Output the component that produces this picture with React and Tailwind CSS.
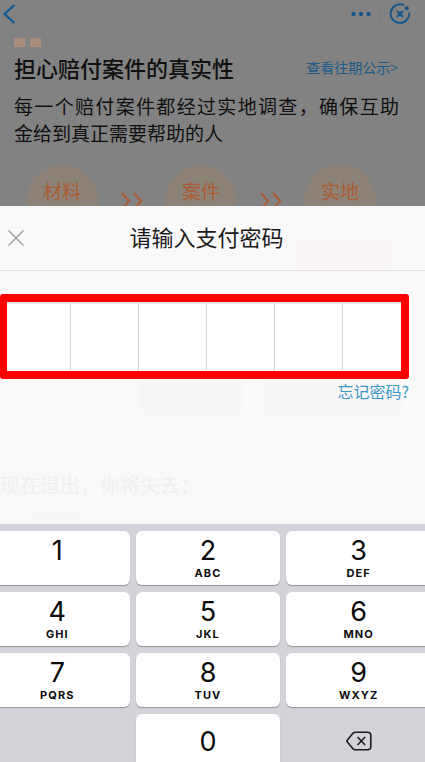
import React, { Fragment, useState } from 'react';

const KEYS = [
  { digit: '1', letters: '' },
  { digit: '2', letters: 'ABC' },
  { digit: '3', letters: 'DEF' },
  { digit: '4', letters: 'GHI' },
  { digit: '5', letters: 'JKL' },
  { digit: '6', letters: 'MNO' },
  { digit: '7', letters: 'PQRS' },
  { digit: '8', letters: 'TUV' },
  { digit: '9', letters: 'WXYZ' }
];

const STEPS = ['材料', '案件', '实地'];

const PIN_LENGTH = 6;

const BackIcon = () => (
  <svg width="14" height="20" viewBox="0 0 14 20" fill="none" stroke="#0f5a96" strokeWidth="2.2">
    <path d="M12.5 1 2.5 10l10 9" />
  </svg>
);

const MoreIcon = () => (
  <svg width="22" height="6" viewBox="0 0 22 6" fill="#14568c">
    <circle cx="3.5" cy="3" r="2.2" />
    <circle cx="11" cy="3" r="2.2" />
    <circle cx="18.5" cy="3" r="2.2" />
  </svg>
);

const ExitIcon = () => (
  <svg width="22" height="22" viewBox="0 0 22 22" fill="none" stroke="#14568c" strokeWidth="1.9">
    <path d="M15 2.2A9.3 9.3 0 1 0 20.2 9.5" />
    <path d="m8 8 6 6M14 8l-6 6" />
    <circle cx="17.8" cy="5.2" r="2" fill="#14568c" stroke="none" />
  </svg>
);

const StepArrows = () => (
  <svg className="mt-[27px]" width="22" height="18" viewBox="0 0 22 18" fill="none" stroke="#ac5a33" strokeWidth="2">
    <path d="m1 1 7 8-7 8M13 1l7 8-7 8" />
  </svg>
);

const CloseIcon = () => (
  <svg width="16" height="16" viewBox="0 0 16 16" fill="none" stroke="#9b9b9b" strokeWidth="1.3">
    <path d="m.5.5 15 15M15.5.5l-15 15" />
  </svg>
);

const BackspaceIcon = () => (
  <svg width="26" height="20" viewBox="0 0 26 20" fill="none" stroke="#1d1d20" strokeWidth="1.6" strokeLinejoin="round">
    <path d="M9.2 1.2h12.6a3 3 0 0 1 3 3v11.6a3 3 0 0 1-3 3H9.2a3 3 0 0 1-2.1-.9L1.6 11.2a1.7 1.7 0 0 1 0-2.4l5.5-6.7a3 3 0 0 1 2.1-.9Z" />
    <path d="m11.5 6 7.6 8M19.1 6l-7.6 8" />
  </svg>
);

const CasePage = () => (
  <main className="flex-1 min-h-0 overflow-hidden bg-[#828282] text-[#101010]">
    <header className="flex h-7 items-center justify-between pl-[2px] pr-[14px]">
      <button type="button" aria-label="返回">
        <BackIcon />
      </button>
      <div className="flex items-center">
        <button type="button" aria-label="更多">
          <MoreIcon />
        </button>
        <span className="mx-2 h-5 w-px bg-[#7b7b7b]" />
        <button type="button" aria-label="关闭">
          <ExitIcon />
        </button>
      </div>
    </header>

    <div className="mt-[10px] flex gap-[5px] pl-[14px]">
      <span className="h-[9px] w-[11px] bg-[#a88c7e]" />
      <span className="h-[9px] w-[11px] bg-[#a88c7e]" />
    </div>

    <div className="mt-[6px] flex items-center justify-between pl-[14px] pr-[27px]">
      <h1 className="text-[22px] leading-7 font-medium">担心赔付案件的真实性</h1>
      <a href="#cases" className="text-[14px] leading-7 text-[#1c5a87]">查看往期公示&gt;</a>
    </div>

    <p className="mt-[11px] pl-[14px] pr-[26px] text-[19px] leading-[27px]">
      <span className="block [text-align-last:justify]">每一个赔付案件都经过实地调查，确保互助</span>
      <span className="block">金给到真正需要帮助的人</span>
    </p>

    <div className="mt-[19px] flex items-start justify-between pl-[26px] pr-[49px]">
      {STEPS.map((step, i) => (
        <Fragment key={step}>
          {i > 0 && <StepArrows />}
          <div className="h-[72px] w-[72px] rounded-full bg-[#8d8277] pt-3 text-center text-[19px] leading-7 text-[#ac5a33]">
            {step}
          </div>
        </Fragment>
      ))}
    </div>
  </main>
);

const PasswordSheet = ({ pin }) => (
  <section className="relative bg-[#f9f9f9]">
    {/* Cards showing faintly through the sheet */}
    <div className="absolute top-[31px] left-[292px] h-8 w-[102px] rounded-lg bg-[#faf7f6]" />
    <div className="absolute top-[172px] left-[140px] h-[38px] w-[103px] rounded-lg bg-[#f9f7f6]" />
    <div className="absolute top-[172px] left-[264px] h-[38px] w-[139px] rounded-lg bg-[#f9f7f6]" />

    <div className="relative flex h-[65px] items-center border-b border-[#e4e4e6] pl-2 pr-9">
      <button type="button" aria-label="关闭">
        <CloseIcon />
      </button>
      <h2 className="flex-1 pb-1 text-center text-[22px] leading-8 text-[#1a1a1a]">请输入支付密码</h2>
    </div>

    <div className="relative mt-[23px] mr-4 grid h-[85px] grid-cols-[64fr_68fr_68fr_68fr_68fr_58fr] rounded-[3px] border-8 border-l-[7px] border-[#fe0000] bg-white">
      {Array.from({ length: PIN_LENGTH }, (_, i) => (
        <input
          key={i}
          type="password"
          aria-label={`密码第${i + 1}位`}
          value={pin[i] || ''}
          readOnly
          className="w-full min-w-0 border-t-2 border-r border-[#d8d8d8] border-t-[#e6e6e6] text-center text-2xl outline-none last:border-r-0"
        />
      ))}
    </div>

    <div className="relative flex justify-end pr-4">
      <a href="#forgot" className="text-[16px] leading-6 text-[#3c96c6]">忘记密码?</a>
    </div>

    <div className="mt-[68px] pb-px">
      <p className="text-[20px] leading-7 text-[#f0f0f0]">现在退出，你将失去：</p>
      <div className="mt-[14px] ml-8 h-[10px] w-12 bg-[#f8f5f5]" />
    </div>
  </section>
);

const Keypad = ({ onPress, onDelete }) => (
  <section className="-mb-[6px] overflow-hidden bg-[#d2d4da] pt-[7px] font-['Inter','Liberation_Sans',sans-serif] text-[#0b0b0b]">
    <div className="-mr-[6px] -ml-[15px] grid auto-rows-[54px] grid-cols-3 gap-x-[6px] gap-y-[7px]">
      {KEYS.map(({ digit, letters }) => (
        <button
          key={digit}
          type="button"
          onClick={() => onPress(digit)}
          className="flex flex-col items-center rounded-md bg-white pt-1 shadow-[0_1px_1px_#919399]"
        >
          <span className="text-[27px] leading-[31px]">{digit}</span>
          <span className="text-[11px] leading-[14px] font-bold tracking-widest">{letters}</span>
        </button>
      ))}
      <span />
      <button
        type="button"
        onClick={() => onPress('0')}
        className="rounded-md bg-white text-[27px] leading-[31px] shadow-[0_1px_1px_#919399]"
      >
        0
      </button>
      <button type="button" aria-label="删除" onClick={onDelete} className="flex items-center justify-center">
        <BackspaceIcon />
      </button>
    </div>
  </section>
);

const App = () => {
  const [pin, setPin] = useState('');

  const handlePress = (digit) => {
    setPin(prev => (prev.length < PIN_LENGTH ? prev + digit : prev));
  };

  const handleDelete = () => {
    setPin(prev => prev.slice(0, -1));
  };

  return (
    <div className="flex h-screen flex-col overflow-hidden font-['Noto_Sans_CJK_SC',sans-serif]">
      <CasePage />
      <PasswordSheet pin={pin} />
      <Keypad onPress={handlePress} onDelete={handleDelete} />
    </div>
  );
};

export default App;
